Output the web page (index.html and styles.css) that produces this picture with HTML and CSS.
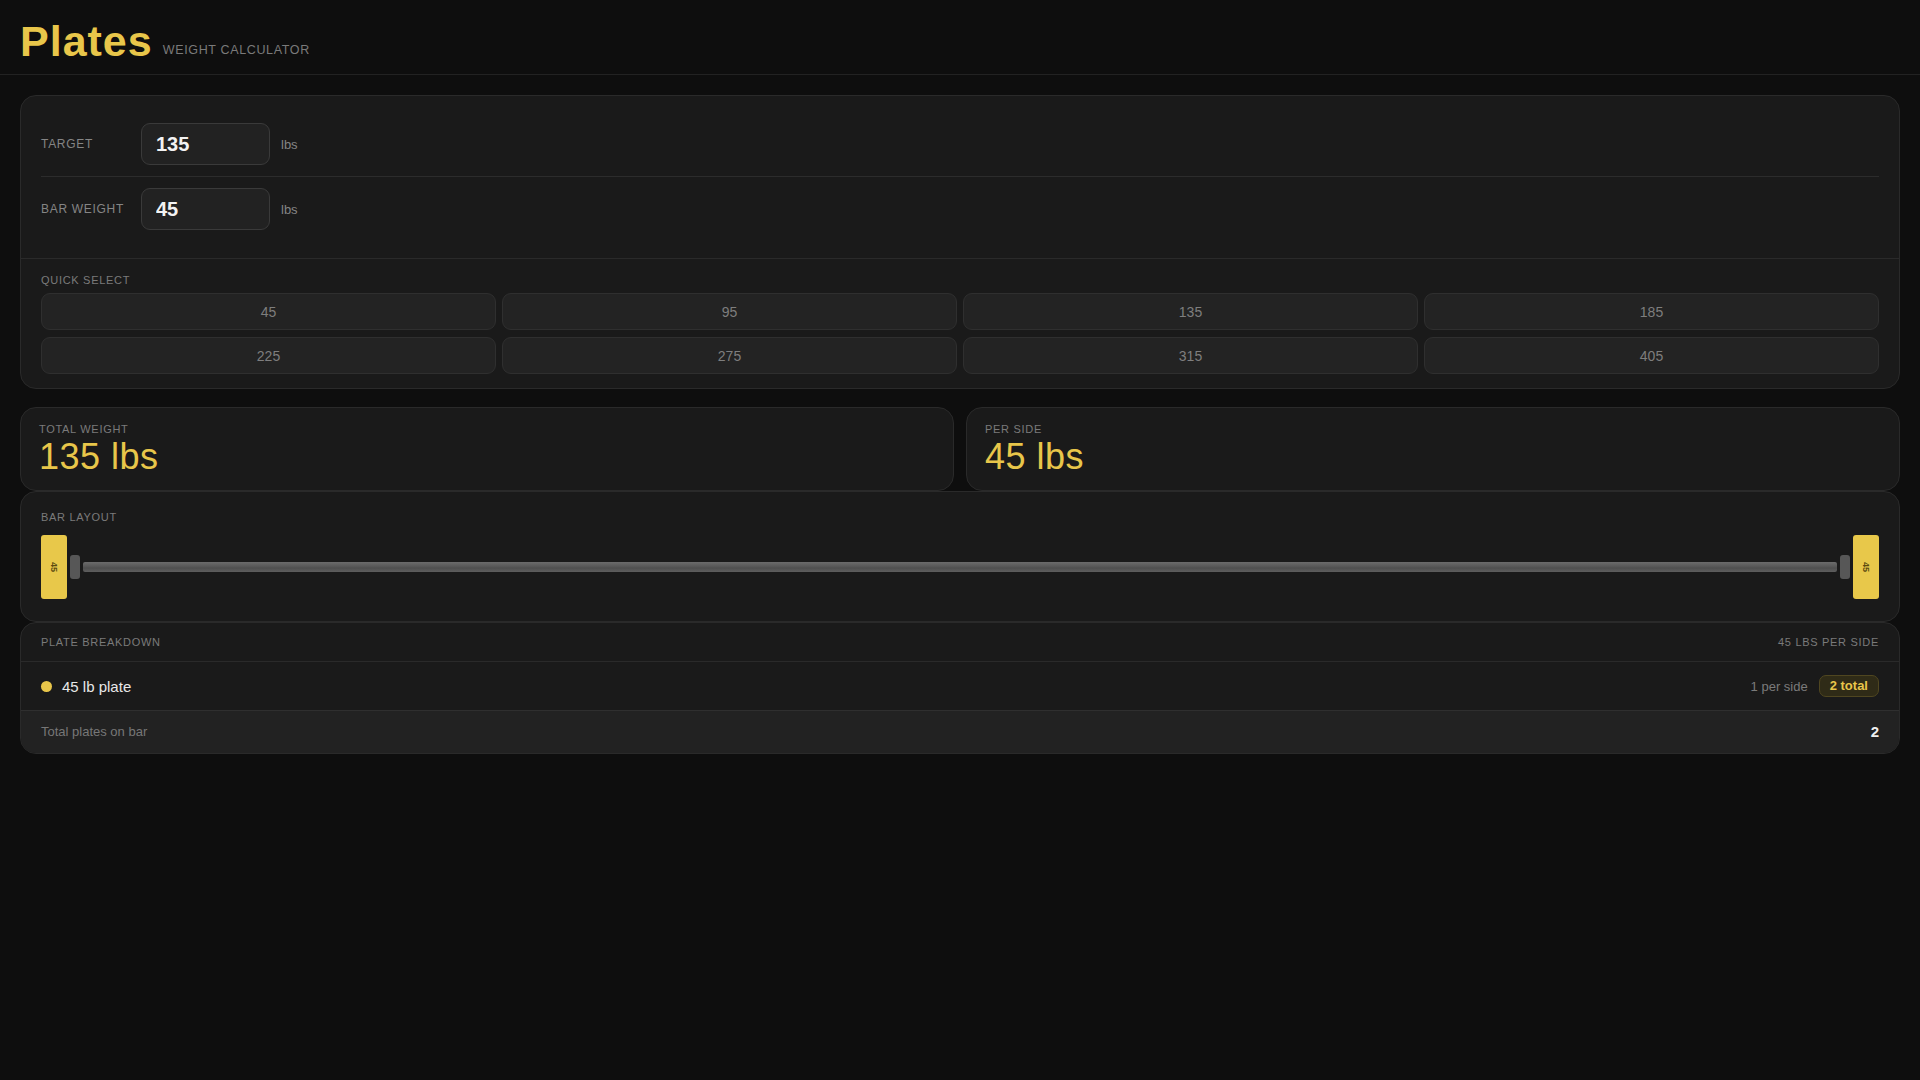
FILE: index.html
```html
<!DOCTYPE html>
<html lang="en">
<head>
<meta charset="utf-8">
<title>Plates — Weight Calculator</title>
<link rel="stylesheet" href="styles.css">
</head>
<body>
<header class="topbar">
  <h1 class="brand">Plates</h1>
  <span class="tagline">WEIGHT CALCULATOR</span>
</header>
<main class="page">
  <section class="card setup">
    <div class="fields">
      <div class="field-row">
        <label class="field-label" for="target">TARGET</label>
        <input class="num-input" id="target" type="text" value="135">
        <span class="unit">lbs</span>
      </div>
      <div class="field-row">
        <label class="field-label" for="bar">BAR WEIGHT</label>
        <input class="num-input" id="bar" type="text" value="45">
        <span class="unit">lbs</span>
      </div>
    </div>
    <div class="quick">
      <div class="section-label">QUICK SELECT</div>
      <div class="quick-grid">
        <button class="quick-btn">45</button>
        <button class="quick-btn">95</button>
        <button class="quick-btn">135</button>
        <button class="quick-btn">185</button>
        <button class="quick-btn">225</button>
        <button class="quick-btn">275</button>
        <button class="quick-btn">315</button>
        <button class="quick-btn">405</button>
      </div>
    </div>
  </section>

  <div class="stats">
    <div class="card stat">
      <div class="section-label">TOTAL WEIGHT</div>
      <div class="stat-value">135 lbs</div>
    </div>
    <div class="card stat">
      <div class="section-label">PER SIDE</div>
      <div class="stat-value">45 lbs</div>
    </div>
  </div>

  <section class="card bar-card">
    <div class="section-label">BAR LAYOUT</div>
    <div class="barbell">
      <div class="plate"><span class="plate-text">45</span></div>
      <div class="collar"></div>
      <div class="shaft"></div>
      <div class="collar"></div>
      <div class="plate"><span class="plate-text">45</span></div>
    </div>
  </section>

  <section class="card breakdown">
    <div class="bd-head">
      <span class="section-label">PLATE BREAKDOWN</span>
      <span class="section-label">45 LBS PER SIDE</span>
    </div>
    <div class="bd-row">
      <div class="bd-name"><span class="dot"></span><span>45 lb plate</span></div>
      <div class="bd-count"><span class="per-side">1 per side</span><span class="badge">2 total</span></div>
    </div>
    <div class="bd-foot">
      <span class="foot-label">Total plates on bar</span>
      <span class="foot-value">2</span>
    </div>
  </section>
</main>
</body>
</html>
```

FILE: styles.css
```css
* { box-sizing: border-box; }

html, body {
  margin: 0;
  padding: 0;
  background: #0e0e0e;
  color: #e8e8e8;
  font-family: "Liberation Sans", Arial, sans-serif;
}

.topbar {
  display: flex;
  align-items: flex-end;
  gap: 10px;
  padding: 20px 20px 11px;
  border-bottom: 1px solid #222222;
}

.brand {
  margin: 0;
  font-size: 43px;
  line-height: 43px;
  font-weight: 700;
  letter-spacing: 1px;
  color: #e8c64a;
}

.tagline {
  font-size: 12.5px;
  line-height: 15px;
  margin-bottom: 5px;
  letter-spacing: 0.65px;
  color: #7a7a7a;
}

.page {
  padding: 20px 20px;
}

.card {
  background: #1a1a1a;
  border: 1px solid #2a2a2a;
  border-radius: 16px;
}

.setup {
  margin-bottom: 18px;
}

.fields {
  padding: 16px 20px 17px;
  border-bottom: 1px solid #2a2a2a;
}

.field-row {
  display: flex;
  align-items: center;
  padding: 11px 0;
}

.field-row + .field-row {
  border-top: 1px solid #2c2c2c;
}

.field-label {
  width: 100px;
  font-size: 12px;
  letter-spacing: 0.7px;
  color: #858585;
}

.num-input {
  width: 129px;
  height: 42px;
  padding: 0 14px;
  background: #222222;
  border: 1px solid #3a3a3a;
  border-radius: 9px;
  color: #f2f2f2;
  font-family: "Liberation Sans", Arial, sans-serif;
  font-size: 20px;
  font-weight: 700;
  outline: none;
}

.unit {
  margin-left: 11px;
  font-size: 13px;
  color: #858585;
}

.quick {
  padding: 15px 20px 14px;
}

.section-label {
  font-size: 11px;
  line-height: 13px;
  letter-spacing: 0.7px;
  color: #7a7a7a;
}

.quick .section-label {
  margin-bottom: 6px;
}

.quick-grid {
  display: grid;
  grid-template-columns: repeat(4, 1fr);
  column-gap: 6px;
  row-gap: 7px;
}

.quick-btn {
  height: 37px;
  background: #232323;
  border: 1px solid #2f2f2f;
  border-radius: 9px;
  color: #7e7e7e;
  font-family: "Liberation Sans", Arial, sans-serif;
  font-size: 14px;
  padding: 0;
}

.stats {
  display: grid;
  grid-template-columns: 1fr 1fr;
  gap: 12px;
}

.stat {
  padding: 15px 18px 15px;
  border-radius: 16px;
}

.stat .section-label {
  margin-bottom: 3px;
}

.stat-value {
  font-size: 36px;
  line-height: 36px;
  letter-spacing: 0.5px;
  color: #e8c64a;
}

.bar-card {
  padding: 19px 20px 22px;
}

.bar-card .section-label {
  margin-bottom: 11px;
}

.barbell {
  display: flex;
  align-items: center;
  gap: 3px;
  height: 64px;
}

.plate {
  width: 26px;
  height: 64px;
  flex: none;
  background: #e8c84a;
  border-radius: 3px;
  display: flex;
  align-items: center;
  justify-content: center;
}

.plate-text {
  writing-mode: vertical-rl;
  font-size: 9px;
  font-weight: 700;
  color: #5b4a10;
}

.collar {
  width: 10px;
  height: 24px;
  flex: none;
  background: #575757;
  border-radius: 3px;
}

.shaft {
  flex: 1;
  height: 10px;
  border-radius: 2px;
  background: linear-gradient(180deg, #6c6c6c 0%, #5a5a5a 40%, #4f4f4f 60%, #5e5e5e 100%);
}

.breakdown {
  overflow: hidden;
}

.bd-head {
  display: flex;
  justify-content: space-between;
  align-items: center;
  padding: 13px 20px 12px;
  border-bottom: 1px solid #2a2a2a;
}

.bd-row {
  display: flex;
  justify-content: space-between;
  align-items: center;
  padding: 12px 20px;
  min-height: 49px;
  border-bottom: 1px solid #2f2f2f;
}

.bd-name {
  display: flex;
  align-items: center;
  gap: 10px;
  font-size: 15px;
  color: #e8e8e8;
}

.dot {
  width: 11px;
  height: 11px;
  border-radius: 50%;
  background: #e8c64a;
}

.bd-count {
  display: flex;
  align-items: center;
  gap: 11px;
}

.per-side {
  font-size: 13px;
  color: #7a7a7a;
}

.badge {
  padding: 2px 10px;
  line-height: 16px;
  font-size: 13px;
  font-weight: 700;
  color: #e8c64a;
  background: #2f2b17;
  border: 1px solid #4f4620;
  border-radius: 7px;
}

.bd-foot {
  display: flex;
  justify-content: space-between;
  align-items: center;
  padding: 12px 20px;
  background: #222222;
}

.foot-label {
  font-size: 13px;
  line-height: 18px;
  color: #777777;
}

.foot-value {
  font-size: 15px;
  line-height: 18px;
  font-weight: 700;
  color: #f0f0f0;
}
```
